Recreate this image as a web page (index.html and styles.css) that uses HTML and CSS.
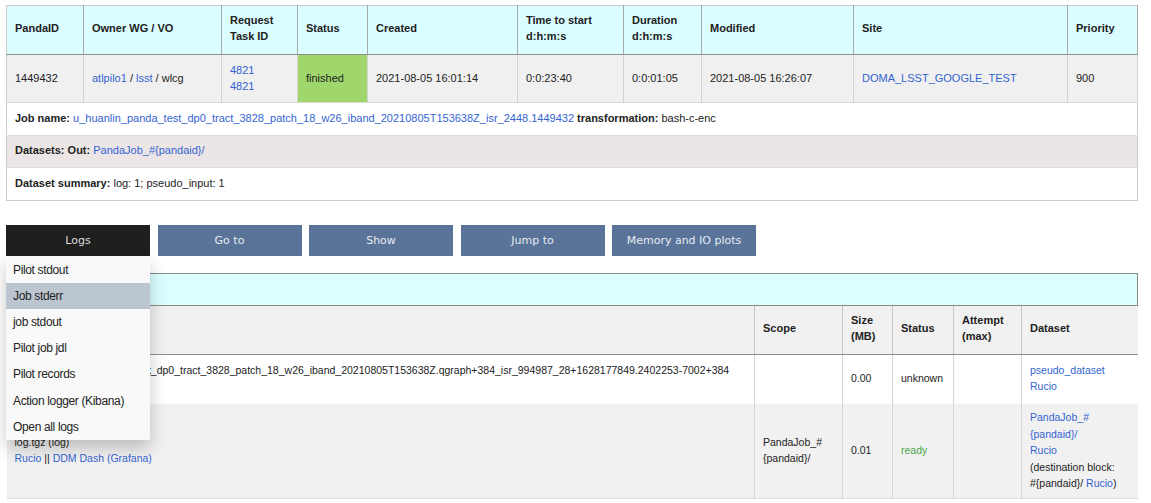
FILE: index.html
```html
<!DOCTYPE html>
<html>
<head>
<meta charset="utf-8">
<title>PanDA job 1449432</title>
<link rel="stylesheet" href="styles.css">
</head>
<body>
<table class="job-table">
  <colgroup>
    <col class="c1"><col class="c2"><col class="c3"><col class="c4"><col class="c5">
    <col class="c6"><col class="c7"><col class="c8"><col class="c9"><col class="c10">
  </colgroup>
  <thead>
    <tr>
      <th>PandaID</th>
      <th>Owner WG / VO</th>
      <th>Request<br>Task ID</th>
      <th>Status</th>
      <th>Created</th>
      <th>Time to start<br>d:h:m:s</th>
      <th>Duration<br>d:h:m:s</th>
      <th>Modified</th>
      <th>Site</th>
      <th>Priority</th>
    </tr>
  </thead>
  <tbody>
    <tr class="main-row">
      <td>1449432</td>
      <td><a href="#">atlpilo1</a> / <a href="#">lsst</a> / wlcg</td>
      <td><a href="#" class="blk">4821</a><a href="#" class="blk">4821</a></td>
      <td class="st-finished">finished</td>
      <td>2021-08-05 16:01:14</td>
      <td>0:0:23:40</td>
      <td>0:0:01:05</td>
      <td>2021-08-05 16:26:07</td>
      <td><a href="#">DOMA_LSST_GOOGLE_TEST</a></td>
      <td>900</td>
    </tr>
    <tr class="info-row">
      <td colspan="10"><b>Job name:</b> <a href="#">u_huanlin_panda_test_dp0_tract_3828_patch_18_w26_iband_20210805T153638Z_isr_2448.1449432</a> <b>transformation:</b> bash-c-enc</td>
    </tr>
    <tr class="info-row alt">
      <td colspan="10"><b>Datasets:</b> <b>Out:</b> <a href="#">PandaJob_#{pandaid}/</a></td>
    </tr>
    <tr class="info-row">
      <td colspan="10"><b>Dataset summary:</b> log: 1; pseudo_input: 1</td>
    </tr>
  </tbody>
</table>

<div class="btn-bar">
  <div class="dropdown">
    <div class="btn btn-dark">Logs</div>
    <div class="dropdown-menu">
      <a href="#">Pilot stdout</a>
      <a href="#" class="active">Job stderr</a>
      <a href="#">job stdout</a>
      <a href="#">Pilot job jdl</a>
      <a href="#">Pilot records</a>
      <a href="#">Action logger (Kibana)</a>
      <a href="#">Open all logs</a>
    </div>
  </div>
  <div class="btn">Go to</div>
  <div class="btn">Show</div>
  <div class="btn">Jump to</div>
  <div class="btn">Memory and IO plots</div>
</div>

<table class="files-table">
  <colgroup>
    <col class="f1"><col class="f2"><col class="f3"><col class="f4"><col class="f5"><col class="f6">
  </colgroup>
  <thead>
    <tr class="title-row"><th colspan="6">Files</th></tr>
    <tr class="head-row">
      <th>Filename (Type)</th>
      <th>Scope</th>
      <th>Size<br>(MB)</th>
      <th>Status</th>
      <th>Attempt<br>(max)</th>
      <th>Dataset</th>
    </tr>
  </thead>
  <tbody>
    <tr class="row-a">
      <td><span class="fname">u_huanlin_panda_test_dp0_tract_3828_patch_18_w26_iband_20210805T153638Z.qgraph+384_isr_994987_28+1628177849.2402253-7002+384</span><br>(pseudo_input)</td>
      <td></td>
      <td>0.00</td>
      <td>unknown</td>
      <td></td>
      <td><a href="#">pseudo_dataset</a><br><a href="#">Rucio</a></td>
    </tr>
    <tr class="row-b">
      <td>log.tgz (log)<br><a href="#">Rucio</a> || <a href="#">DDM Dash (Grafana)</a></td>
      <td>PandaJob_#<br>{pandaid}/</td>
      <td>0.01</td>
      <td class="st-ready">ready</td>
      <td></td>
      <td><a href="#">PandaJob_#<br>{pandaid}/</a><br><a href="#">Rucio</a><br>(destination block:<br>#{pandaid}/ <a href="#">Rucio</a>)</td>
    </tr>
  </tbody>
</table>
</body>
</html>
```
FILE: styles.css
```css
body {
  margin: 0;
  padding: 5px 0 0 6px;
  background: #ffffff;
  font-family: "Liberation Sans", Arial, sans-serif;
  font-size: 11px;
  line-height: 16px;
  color: #222222;
}

a {
  color: #3464d2;
  text-decoration: none;
}

a.blk {
  display: block;
}

table {
  border-collapse: collapse;
  width: 1131px;
  table-layout: fixed;
}

th, td {
  text-align: left;
  vertical-align: middle;
  padding: 8px 8px;
}

th {
  font-weight: bold;
}

/* ---------- job table ---------- */
.job-table {
  border: 1px solid #cccccc;
}

.c1 { width: 77px; }
.c2 { width: 138px; }
.c3 { width: 76px; }
.c4 { width: 70px; }
.c5 { width: 150px; }
.c6 { width: 106px; }
.c7 { width: 78px; }
.c8 { width: 152px; }
.c9 { width: 214px; }
.c10 { width: 70px; }

.job-table thead th {
  background: #dafdff;
  border-right: 1px solid #a9a9a9;
  border-bottom: 1px solid #8f8f8f;
  padding-top: 6px;
  padding-bottom: 10px;
}

.main-row td {
  background: #f0f0f0;
  border-right: 1px solid #d2d2d2;
  padding-top: 6.5px;
  padding-bottom: 8.5px;
}

.main-row td.st-finished {
  background: #a0d76d;
}

.info-row td {
  background: #ffffff;
  border-top: 1px solid #dcdcdc;
  padding-top: 6.5px;
  padding-bottom: 9px;
}

.info-row.alt td {
  background: #ebe5e5;
}

/* ---------- buttons ---------- */
.btn-bar {
  display: flex;
  gap: 7.5px;
  margin-top: 24px;
}

.dropdown {
  position: relative;
}

.btn {
  width: 144px;
  height: 31px;
  line-height: 32px;
  text-align: center;
  background: #5a7399;
  color: #e6ebf2;
  font-family: "DejaVu Sans", Verdana, sans-serif;
  font-size: 11px;
}

.btn-dark {
  background: #1f1f1f;
  color: #dedede;
}

.dropdown-menu {
  position: absolute;
  top: 31px;
  left: 0;
  width: 144px;
  padding-top: 1px;
  background: #f9f9f9;
  box-shadow: 0 8px 16px 0 rgba(0, 0, 0, 0.22);
  z-index: 10;
}

.dropdown-menu a {
  display: block;
  padding: 5px 7px;
  line-height: 16.2px;
  font-size: 12px;
  letter-spacing: -0.35px;
  color: #222222;
}

.dropdown-menu a.active {
  background: #bcc6d1;
}

/* ---------- files table ---------- */
.files-table {
  margin-top: 17px;
  border-bottom: 1px solid #dddddd;
}

.f1 { width: 748px; }
.f2 { width: 88px; }
.f3 { width: 50px; }
.f4 { width: 61px; }
.f5 { width: 68px; }
.f6 { width: 116px; }

.title-row th {
  background: #dbffff;
  border: 1px solid #8a8a8a;
  padding: 7px 8px 8px;
}

.head-row th {
  background: #f1f1f1;
  border-right: 1px solid #c8c8c8;
  border-bottom: 1px solid #8f8f8f;
  padding-top: 6px;
  padding-bottom: 10px;
}

.head-row th:last-child,
.files-table td:last-child {
  border-right: none;
}

.files-table td {
  border-right: 1px solid #d6d6d6;
  font-size: 10.5px;
}

.fname {
  padding-left: 33px;
}

.row-a td {
  background: #ffffff;
  padding-top: 7px;
  padding-bottom: 10px;
}

.row-b td {
  background: #f1f1f1;
  padding-top: 5.5px;
  padding-bottom: 6.5px;
  line-height: 16.5px;
}

.st-ready {
  color: #4aa64a;
}
```
